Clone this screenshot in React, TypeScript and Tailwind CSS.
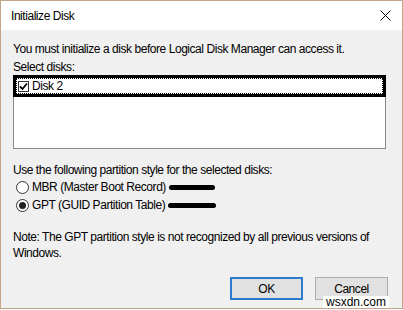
const font = { fontFamily: '"Segoe UI", "Liberation Sans", Arial, sans-serif' };

function CloseIcon() {
  return (
    <svg width="11" height="11" viewBox="0 0 11 11" className="block">
      <path d="M0.5 0.5 L10.5 10.5 M10.5 0.5 L0.5 10.5" stroke="#000" strokeWidth="1" fill="none" />
    </svg>
  );
}

function Radio({ checked, label, bar }: { checked?: boolean; label: string; bar: string }) {
  return (
    <div className="flex items-center h-[18px]">
      <span className="w-[13px] h-[13px] rounded-full border border-[#333] bg-white flex items-center justify-center ml-[3px] mr-[3px]">
        {checked && <span className="w-[7px] h-[7px] rounded-full bg-[#222]" />}
      </span>
      <span>{label}</span>
      <span className={`ml-[3px] h-[5px] rounded-full bg-black ${bar}`} />
    </div>
  );
}

export default function App() {
  return (
    <div className="w-[403px] h-[310px] bg-white text-[12px] tracking-[-0.45px] text-black" style={font}>
      <div className="w-[403px] h-[309px] border border-[#c5a58a] flex flex-col bg-[#f0f0f0]">
        {/* Title bar */}
        <div className="h-[30px] bg-white flex items-center justify-between pl-[10px] pr-[11px]">
          <span className="text-[12px]">Initialize Disk</span>
          <CloseIcon />
        </div>

        {/* Body */}
        <div className="flex-1 flex flex-col px-[12px] pt-[12px]">
          <p className="leading-[15px]">You must initialize a disk before Logical Disk Manager can access it.</p>
          <p className="leading-[15px] mt-[3px]">Select disks:</p>

          <div className="w-[373px] h-[74px] bg-white border border-[#828790] relative">
            <div className="absolute -left-px -top-px w-[373px] h-[22px] border-[3px] border-black">
              <div className="h-full border border-dotted border-black flex items-center pl-[1px]">
                <span className="w-[11px] h-[11px] border border-[#333] bg-white flex items-center justify-center mr-[3px]">
                  <svg width="9" height="9" viewBox="0 0 9 9">
                    <path d="M1 4.5 L3.5 7 L8 1.5" stroke="#000" strokeWidth="1.8" fill="none" />
                  </svg>
                </span>
                <span>Disk 2</span>
              </div>
            </div>
          </div>

          <p className="leading-[15px] mt-[14px]">Use the following partition style for the selected disks:</p>
          <div className="flex flex-col">
            <Radio label="MBR (Master Boot Record)" bar="w-[46px]" />
            <Radio checked label="GPT (GUID Partition Table)" bar="w-[48px]" />
          </div>

          <p className="leading-[16px] mt-[15px] w-[366px]">
            Note: The GPT partition style is not recognized by all previous versions of Windows.
          </p>

          <div className="flex justify-end gap-[12px] mt-[16px] pr-[2px]">
            <button className="w-[73px] h-[23px] bg-[#e1e1e1] border-2 border-[#2b7bd0] text-[12px] tracking-[-0.45px]">OK</button>
            <button className="w-[73px] h-[23px] bg-[#e1e1e1] border border-[#adadad] text-[12px] tracking-[-0.45px]">Cancel</button>
          </div>
          <div className="flex justify-end pr-[1px] -mt-[4px]">
            <span className="text-[12px] leading-[12px] tracking-normal text-black bg-white px-[3px]">wsxdn.com</span>
          </div>
        </div>
      </div>
    </div>
  );
}
